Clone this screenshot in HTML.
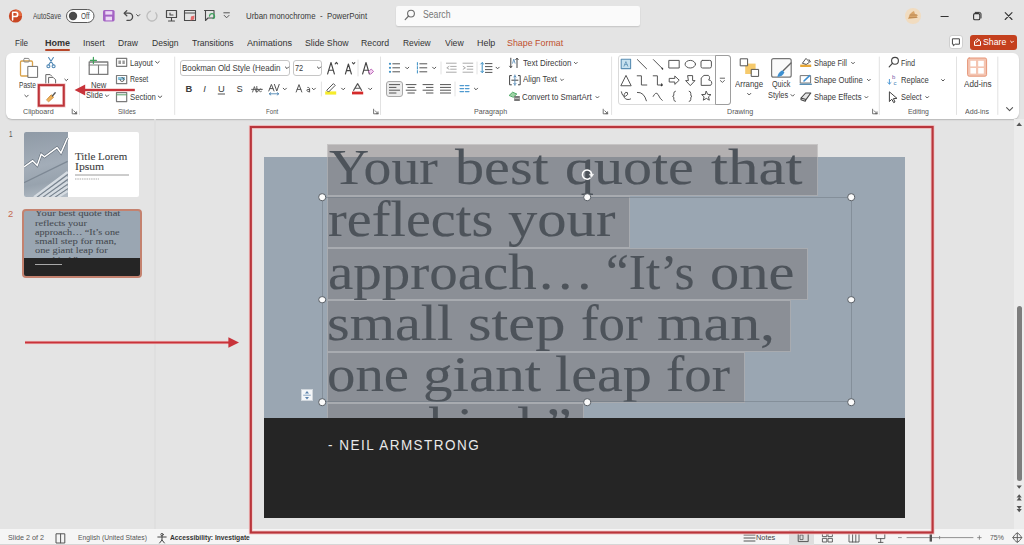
<!DOCTYPE html>
<html><head><meta charset="utf-8">
<style>
*{margin:0;padding:0;box-sizing:border-box}
html,body{width:1024px;height:545px;overflow:hidden;background:#e4e4e4;font-family:"Liberation Sans",sans-serif;color:#262626}
.a{position:absolute;white-space:nowrap}
.tx{position:absolute;white-space:pre;transform-origin:0 0}
#ribbon{position:absolute;left:6px;top:52.5px;width:1013px;height:66px;background:#fff;border-radius:6px;box-shadow:0 1px 1.5px rgba(0,0,0,.2)}
.hb{position:absolute;background:rgba(123,116,118,.47);box-shadow:inset 0 0 0 1px rgba(255,255,255,.25)}
.ql{position:absolute;left:329px;font-family:"Liberation Serif",serif;font-size:50px;line-height:52px;color:#4d535a;-webkit-text-stroke:0.35px #4d535a;white-space:nowrap;transform-origin:0 0}
.hd{position:absolute;width:7.6px;height:7.6px;border-radius:50%;background:#fbfbfb;border:1.3px solid #575d64;transform:translate(-50%,-50%)}
.tl{position:absolute;left:35.4px;font-family:"Liberation Serif",serif;font-size:8.6px;line-height:9px;color:#464b51;-webkit-text-stroke:0.06px #464b51;white-space:nowrap;transform-origin:0 0}
svg{position:absolute;left:0;top:0;overflow:visible}
</style></head><body>

<!-- search box -->
<div class="a" style="left:396px;top:6px;width:244px;height:20px;background:#fafafa;border-radius:2px;box-shadow:0 1px 1.5px rgba(0,0,0,.14)"></div>
<!-- comment + share -->
<div class="a" style="left:948.8px;top:34.5px;width:14.5px;height:14.5px;background:#fff;border:1px solid #cfcfcf;border-radius:3px"></div>
<div class="a" style="left:969.5px;top:34.5px;width:47.8px;height:15px;background:#c4401e;border-radius:3px"></div>
<!-- home underline -->
<div class="a" style="left:45px;top:49px;width:25px;height:2px;background:#b7472a;border-radius:1px"></div>

<div id="ribbon"></div>
<!-- ribbon boxes -->
<div class="a" style="left:180.3px;top:60px;width:110px;height:16px;border:1px solid #c6c6c6;border-radius:3px;background:#fff"></div>
<div class="a" style="left:293.1px;top:60px;width:29px;height:16px;border:1px solid #c6c6c6;border-radius:3px;background:#fff"></div>
<div class="a" style="left:386.4px;top:81px;width:16.5px;height:16px;border:1px solid #a8a8a8;border-radius:3px;background:#ececec"></div>
<div class="a" style="left:617.7px;top:55.2px;width:113px;height:49.5px;border:1px solid #dadada;border-radius:3px;background:#fff"></div>
<div class="a" style="left:715.3px;top:55.2px;width:15.4px;height:49.5px;border:1px solid #9e9e9e;border-radius:0 3px 3px 0"></div>

<!-- thumbnails pane -->
<div class="a" style="left:154px;top:119px;width:2px;height:410px;background:#dfdfdf"></div>
<div class="a" style="left:24px;top:131.6px;width:114.7px;height:65.2px;background:#fff;border-radius:2px;overflow:hidden">
  <div class="a" style="left:0;top:0;width:43.7px;height:65.2px;background:linear-gradient(170deg,#8f9aa6 0%,#a3adb8 50%,#98a3ae 75%,#b5bec7 100%)"></div>
  <svg width="115" height="66" viewBox="0 0 115 66">
    <path d="M0 50.6 L43.6 29.4" stroke="#7d8894" stroke-width="1.2"/>
    <path d="M10 65.2 L43.7 40 M16 65.2 L43.7 45 M22 65.2 L43.7 50 M28 65.2 L43.7 54.5 M34 65.2 L43.7 59" stroke="#d6dce2" stroke-width="2.2"/>
    <path d="M13 65.2 L43.7 42.5 M19 65.2 L43.7 47.5 M25 65.2 L43.7 52.2 M31 65.2 L43.7 56.8" stroke="#6f7a86" stroke-width=".9"/>
    <path d="M0 34.8 L8.6 28.8 L13.2 33.4 L17.2 22.2 L20.5 24.8 L33 15.6 L37 20.9 L43.6 5.7" fill="none" stroke="#5d6874" stroke-width="2.6"/>
    <path d="M0 34.8 L8.6 28.8 L13.2 33.4 L17.2 22.2 L20.5 24.8 L33 15.6 L37 20.9 L43.6 5.7" fill="none" stroke="#fff" stroke-width="1.5"/>
    <path d="M51 43 H105" stroke="#9a9a9a" stroke-width="1"/>
    <path d="M51 47 H75" stroke="#aaa" stroke-width="1.2" stroke-dasharray="1.5 .8"/>
  </svg>
</div>
<div class="a" style="left:22px;top:209.1px;width:119.8px;height:68.9px;border:2.5px solid #c4826f;border-radius:4px;background:#9aa6b2;overflow:hidden">
  <div class="a" style="left:0;top:47px;width:120px;height:20px;background:#252525;border-radius:0 0 2px 2px"></div>
  <div class="a" style="left:11px;top:53px;width:27px;height:1.4px;background:#a8a8a8"></div>
</div>
<div class="a" style="left:24px;top:211px;width:115.5px;height:47px;overflow:hidden">
  <div class="tl" style="left:11.4px;top:-2px;transform:scaleX(1.235)">Your best quote that</div>
  <div class="tl" style="left:11.4px;top:7.5px;transform:scaleX(1.2)">reflects your</div>
  <div class="tl" style="left:11.4px;top:16.5px;transform:scaleX(1.18)">approach… “It’s one</div>
  <div class="tl" style="left:11.4px;top:26px;transform:scaleX(1.235)">small step for man,</div>
  <div class="tl" style="left:11.4px;top:35px;transform:scaleX(1.205)">one giant leap for</div>
  <div class="tl" style="left:11.4px;top:44.5px;transform:scaleX(1.19)">mankind.”</div>
</div>

<!-- slide -->
<div class="a" style="left:264px;top:157px;width:641px;height:360.5px;background:#9aa6b2"></div>
<div class="hb" style="left:327px;top:144px;width:491px;height:52px"></div>
<div class="hb" style="left:327px;top:196px;width:303px;height:52px"></div>
<div class="hb" style="left:327px;top:248px;width:481px;height:52px"></div>
<div class="hb" style="left:327px;top:300px;width:464px;height:52px"></div>
<div class="hb" style="left:327px;top:352px;width:418px;height:51px"></div>
<div class="hb" style="left:327px;top:403px;width:257px;height:20px"></div>
<div class="tx" style="left:328.90px;top:142.12px;font-size:50px;line-height:50px;color:#4d535a;font-weight:normal;font-family:&quot;Liberation Serif&quot;;transform:scaleX(1.1121);-webkit-text-stroke:0.12px #4d535a;">Your</div>
<div class="tx" style="left:454.60px;top:142.12px;font-size:50px;line-height:50px;color:#4d535a;font-weight:normal;font-family:&quot;Liberation Serif&quot;;transform:scaleX(1.1643);-webkit-text-stroke:0.12px #4d535a;">best</div>
<div class="tx" style="left:564.74px;top:142.12px;font-size:50px;line-height:50px;color:#4d535a;font-weight:normal;font-family:&quot;Liberation Serif&quot;;transform:scaleX(1.1599);-webkit-text-stroke:0.12px #4d535a;">quote</div>
<div class="tx" style="left:711.30px;top:142.12px;font-size:50px;line-height:50px;color:#4d535a;font-weight:normal;font-family:&quot;Liberation Serif&quot;;transform:scaleX(1.2200);-webkit-text-stroke:0.12px #4d535a;">that</div>
<div class="tx" style="left:327.63px;top:193.62px;font-size:50px;line-height:50px;color:#4d535a;font-weight:normal;font-family:&quot;Liberation Serif&quot;;transform:scaleX(1.1233);-webkit-text-stroke:0.12px #4d535a;">reflects</div>
<div class="tx" style="left:507.50px;top:193.62px;font-size:50px;line-height:50px;color:#4d535a;font-weight:normal;font-family:&quot;Liberation Serif&quot;;transform:scaleX(1.1717);-webkit-text-stroke:0.12px #4d535a;">your</div>
<div class="tx" style="left:327.66px;top:246.62px;font-size:50px;line-height:50px;color:#4d535a;font-weight:normal;font-family:&quot;Liberation Serif&quot;;transform:scaleX(1.1398);-webkit-text-stroke:0.12px #4d535a;">approach…</div>
<div class="tx" style="left:606.34px;top:246.62px;font-size:50px;line-height:50px;color:#4d535a;font-weight:normal;font-family:&quot;Liberation Serif&quot;;transform:scaleX(1.0275);-webkit-text-stroke:0.12px #4d535a;">“It’s</div>
<div class="tx" style="left:709.63px;top:246.62px;font-size:50px;line-height:50px;color:#4d535a;font-weight:normal;font-family:&quot;Liberation Serif&quot;;transform:scaleX(1.1700);-webkit-text-stroke:0.12px #4d535a;">one</div>
<div class="tx" style="left:327.07px;top:297.93px;font-size:50px;line-height:50px;color:#4d535a;font-weight:normal;font-family:&quot;Liberation Serif&quot;;transform:scaleX(1.1647);-webkit-text-stroke:0.12px #4d535a;">small</div>
<div class="tx" style="left:467.58px;top:297.93px;font-size:50px;line-height:50px;color:#4d535a;font-weight:normal;font-family:&quot;Liberation Serif&quot;;transform:scaleX(1.2097);-webkit-text-stroke:0.12px #4d535a;">step</div>
<div class="tx" style="left:581.44px;top:297.93px;font-size:50px;line-height:50px;color:#4d535a;font-weight:normal;font-family:&quot;Liberation Serif&quot;;transform:scaleX(1.0581);-webkit-text-stroke:0.12px #4d535a;">for</div>
<div class="tx" style="left:657.30px;top:297.93px;font-size:50px;line-height:50px;color:#4d535a;font-weight:normal;font-family:&quot;Liberation Serif&quot;;transform:scaleX(1.1979);-webkit-text-stroke:0.12px #4d535a;">man,</div>
<div class="tx" style="left:327.46px;top:348.73px;font-size:50px;line-height:50px;color:#4d535a;font-weight:normal;font-family:&quot;Liberation Serif&quot;;transform:scaleX(1.1357);-webkit-text-stroke:0.12px #4d535a;">one</div>
<div class="tx" style="left:422.93px;top:348.73px;font-size:50px;line-height:50px;color:#4d535a;font-weight:normal;font-family:&quot;Liberation Serif&quot;;transform:scaleX(1.1827);-webkit-text-stroke:0.12px #4d535a;">giant</div>
<div class="tx" style="left:555.24px;top:348.73px;font-size:50px;line-height:50px;color:#4d535a;font-weight:normal;font-family:&quot;Liberation Serif&quot;;transform:scaleX(1.1627);-webkit-text-stroke:0.12px #4d535a;">leap</div>
<div class="tx" style="left:666.10px;top:348.73px;font-size:50px;line-height:50px;color:#4d535a;font-weight:normal;font-family:&quot;Liberation Serif&quot;;transform:scaleX(1.0963);-webkit-text-stroke:0.12px #4d535a;">for</div>
<div class="tx" style="left:327.84px;top:400.12px;font-size:50px;line-height:50px;color:#4d535a;font-weight:normal;font-family:&quot;Liberation Serif&quot;;transform:scaleX(1.1624);-webkit-text-stroke:0.12px #4d535a;">mankind.”</div>
<div class="a" style="left:264px;top:418px;width:641px;height:99.5px;background:#252525"></div>
<div class="a" style="left:327.5px;top:437.4px;font-size:15px;line-height:15px;letter-spacing:1.65px;color:#e9e9e9;transform:scaleX(0.9);transform-origin:0 0">- NEIL ARMSTRONG</div>
<!-- selection frame -->
<div class="a" style="left:322px;top:196.7px;width:530px;height:205.8px;border:1px solid rgba(110,120,130,.5)"></div>
<div class="hd" style="left:322.4px;top:197.2px"></div>
<div class="hd" style="left:587px;top:197.2px"></div>
<div class="hd" style="left:851.4px;top:197.2px"></div>
<div class="hd" style="left:322.4px;top:299.6px"></div>
<div class="hd" style="left:851.4px;top:299.6px"></div>
<div class="hd" style="left:322.4px;top:402px"></div>
<div class="hd" style="left:587px;top:402px"></div>
<div class="hd" style="left:851.4px;top:402px"></div>
<div class="a" style="left:301px;top:389px;width:12px;height:12px;background:#f4f6f8;border:1px solid #d0d6dc"></div>

<!-- status bar -->
<div class="a" style="left:0;top:529px;width:1024px;height:16px;background:#f5f5f5;border-bottom:1px solid #d6d6d6"></div>
<div class="a" style="left:789px;top:530px;width:25.4px;height:15px;background:#dedede"></div>
<!-- scrollbar -->
<div class="a" style="left:1014px;top:119px;width:10px;height:410px;background:#ececec"></div>
<div class="a" style="left:1017px;top:306px;width:4.6px;height:175px;background:#7d7d7d;border-radius:3px"></div>

<svg width="1024" height="545" viewBox="0 0 1024 545" fill="none" stroke-linecap="round" stroke-linejoin="round">
<!-- ===== title bar ===== -->
<circle cx="15.5" cy="16" r="6.6" fill="#c94724"/>
<path d="M15.5 9.4 A6.6 6.6 0 0 1 22.1 16 L15.5 16Z" fill="#e36a3f"/>
<path d="M12.6 20 V12.3 H15.6 A2.1 2.1 0 0 1 15.6 16.5 H12.6" stroke="#fff" stroke-width="1.5"/>
<rect x="66.5" y="9.5" width="27.5" height="13" rx="6.5" stroke="#595959" stroke-width="1" fill="#fdfdfd"/>
<circle cx="73" cy="16" r="4.2" fill="#4a4a4a"/>
<rect x="103" y="10" width="11.6" height="11.4" rx="1.6" fill="#a463c4"/>
<rect x="105.3" y="11.2" width="7" height="3.4" fill="#ecd9f5"/>
<rect x="105.6" y="16.6" width="6.4" height="3.8" fill="#ecd9f5"/>
<path d="M124.5 13.2 H129 A3.6 3.6 0 0 1 129 20.4 H127" stroke="#4a4a4a" stroke-width="1.3"/>
<path d="M126.8 10.6 L124.2 13.2 L126.8 15.8" stroke="#4a4a4a" stroke-width="1.3"/>
<path d="M136.6 14.6 L138.2 16.2 L139.8 14.6" stroke="#555" stroke-width="1"/>
<path d="M150.5 11.2 A5 5 0 1 0 155.8 12.8" stroke="#bdbdbd" stroke-width="1.3"/>
<rect x="166.5" y="10.5" width="10" height="7" stroke="#4a4a4a" stroke-width="1.2"/>
<path d="M171.5 17.5 V21 M168.5 21 H174.5 M170 13 V15 H173" stroke="#4a4a4a" stroke-width="1.1"/>
<rect x="184.5" y="10.5" width="11" height="10" stroke="#4a4a4a" stroke-width="1.1"/>
<path d="M184.5 13 H195.5" stroke="#4a4a4a" stroke-width="1.1"/>
<path d="M190.5 20.5 L191 16.5 L194.5 15.5 L194 19.5 Z" fill="#e46a6a"/>
<path d="M204.5 10.5 H214 V18 H208 L205.5 20.5 V10.5Z" stroke="#4a4a4a" stroke-width="1.1"/>
<path d="M209.5 16 A2.5 2.5 0 1 1 213 18.5" stroke="#3aa05a" stroke-width="1.3"/>
<path d="M223.8 12.8 H229.4 M224.2 15.4 L226.6 17.8 L229 15.4" stroke="#555" stroke-width="1"/>
<!-- search magnifier -->
<circle cx="411" cy="13.6" r="3.4" stroke="#6a6a6a" stroke-width="1.1"/>
<path d="M408.6 16 L405.2 19.6" stroke="#6a6a6a" stroke-width="1.2"/>
<!-- avatar -->
<circle cx="913" cy="16" r="8" fill="#f1dcc0"/>
<path d="M908 19 Q910 12 914 11 L915 14 L918 15 L916 18 Z" fill="#d8a56a"/>
<path d="M909.5 17.5 H917 M910 15 H916.5" stroke="#b98550" stroke-width=".8"/>
<!-- window controls -->
<path d="M941 16.5 H948.2" stroke="#333" stroke-width="1.1"/>
<rect x="973.6" y="13.6" width="6.2" height="6.2" rx="1.3" stroke="#333" stroke-width="1.1"/>
<path d="M975.2 12.4 H979.4 A1.6 1.6 0 0 1 981 14 V18" stroke="#333" stroke-width="1"/>
<path d="M1005.2 12.7 L1012 19.5 M1012 12.7 L1005.2 19.5" stroke="#333" stroke-width="1.1"/>
<!-- comment icon -->
<path d="M952.8 38.8 H959.4 V44.2 H955.2 L953.4 45.8 V44.2 H952.8Z" stroke="#444" stroke-width="1"/>
<!-- share icon + chevron -->
<path d="M974.5 45 V41.5 L977.5 39 L980.5 41.5 V45 Z M976 42.5 L979.5 40" stroke="#fff" stroke-width="1"/>
<path d="M1010.6 41.2 L1012 42.6 L1013.4 41.2" stroke="#fff" stroke-width="1"/>

<!-- ===== ribbon separators ===== -->
<g stroke="#e2e2e2" stroke-width="1">
<path d="M79.5 57 V114.5 M174.7 57 V114.5 M380.5 57 V114.5 M611.6 57 V114.5 M879.3 57 V114.5 M956.5 57 V114.5 M997.8 57 V114.5"/>
<path d="M358 60 V76 M321.4 82 V96 M441 62 V74 M477 62 V74 M455 82 V96"/>
</g>
<!-- dialog launchers -->
<g stroke="#666" stroke-width=".9">
<path d="M72.2 109.2 V113.8 H76.8 M73.8 110.8 L76.6 113.6 M76.6 111.8 V113.6 H74.8"/>
<path d="M373.6 109.2 V113.8 H378.2 M375.2 110.8 L378 113.6 M378 111.8 V113.6 H376.2"/>
<path d="M603.2 109.2 V113.8 H607.8 M604.8 110.8 L607.6 113.6 M607.6 111.8 V113.6 H605.8"/>
<path d="M872.6 109.2 V113.8 H877.2 M874.2 110.8 L877 113.6 M877 111.8 V113.6 H875.2"/>
</g>

<!-- ===== clipboard ===== -->
<rect x="20.5" y="61" width="12" height="15" rx="1.2" stroke="#d9a24b" stroke-width="1.3" fill="#fff"/>
<rect x="23.8" y="58.4" width="5.4" height="3.6" rx="1" stroke="#8a8a8a" stroke-width="1"/>
<rect x="28.2" y="66.4" width="9.4" height="11" fill="#fff" stroke="#6e6e6e" stroke-width="1"/>
<path d="M24.8 95.2 L26.5 96.9 L28.2 95.2" stroke="#555" stroke-width="1"/>
<g stroke="#4f87b4" stroke-width="1.1">
<path d="M48.6 57.5 L53.4 65 M53.4 57.5 L48.6 65"/>
<circle cx="48.4" cy="66.2" r="1.5"/><circle cx="53.6" cy="66.2" r="1.5"/>
</g>
<path d="M45.8 83.8 V74.6 H50.2 L51.8 76.2 M48.6 83.8 V77.4 H53.2 L55.6 79.8 V83.8" stroke="#666" stroke-width="1"/>
<path d="M64.8 79.2 L66.3 80.7 L67.8 79.2" stroke="#555" stroke-width="1"/>
<path d="M46.8 99.6 L51.2 94.8 L53.6 97.2 L48.8 101.6 Z" fill="#f0b25a" stroke="#c98a34" stroke-width=".9"/>
<path d="M52.4 96 L55.2 92.8" stroke="#555" stroke-width="1.3"/>

<!-- ===== slides ===== -->
<rect x="89.2" y="62" width="18.6" height="12.4" stroke="#7b7b7b" stroke-width="1.3"/>
<path d="M89.2 65 H107.8 M98.5 65 V74.4" stroke="#7b7b7b" stroke-width="1.1"/>
<path d="M93.4 57.4 V63.4 M90.4 60.4 H96.4" stroke="#3fa35a" stroke-width="1.2"/>
<path d="M105.4 95 L107 96.6 L108.6 95" stroke="#555" stroke-width="1"/>
<rect x="116.5" y="58.3" width="10.2" height="8" stroke="#7b7b7b" stroke-width="1.2"/>
<path d="M118.4 60.6 H121 V64 H118.4Z M122.4 60.6 H124.8 V64 H122.4Z" fill="#9a9a9a"/>
<path d="M155.6 61.6 L157.4 63.2 L159.2 61.6" stroke="#555" stroke-width="1"/>
<rect x="116.5" y="75.5" width="10.2" height="8.2" stroke="#7b7b7b" stroke-width="1.2"/>
<path d="M118 77 H125 V80 H118Z" fill="#8cc6e0"/>
<path d="M120 79.5 A2 2 0 1 0 122 77.5" stroke="#444" stroke-width=".8"/>
<rect x="116.5" y="92.6" width="10.2" height="9" stroke="#7b7b7b" stroke-width="1.2"/>
<path d="M116.5 94.8 H126.7" stroke="#5aa06a" stroke-width="1"/>
<path d="M158.2 96 L160 97.6 L161.8 96" stroke="#555" stroke-width="1"/>

<!-- ===== font ===== -->
<path d="M285.4 67 L287 68.6 L288.6 67 M317.4 67 L319 68.6 L320.6 67" stroke="#444" stroke-width="1"/>
<g stroke="#444" stroke-width="1.1">
<path d="M327.6 74 L331 62.5 L334.4 74 M328.8 70.2 H333.2 M335.2 63.8 L336.4 62.4 L337.6 63.8"/>
<path d="M345.4 74 L348.4 64 L351.4 74 M346.4 70.6 H350.4 M352.4 62.6 L353.6 64 L354.8 62.6"/>
<path d="M362.6 74 L366 62.5 L369.4 74 M363.8 70.2 H368.2"/>
</g>
<path d="M368.6 71.6 L371.2 69 L373.6 71.4 L371 74 Z" fill="#f4d2f2" stroke="#b45bb0" stroke-width=".9"/>
<g fill="#3c3c3c" font-family="Liberation Sans" font-size="9.4">
<text x="185.6" y="92.2" font-weight="bold">B</text>
<text x="203.2" y="92.2" font-style="italic">I</text>
<text x="218" y="92.2">U</text>
<text x="236.6" y="92.2">S</text>
</g>
<path d="M218.2 94 H224.6" stroke="#3c3c3c" stroke-width=".9"/>
<g stroke="#555" stroke-width=".9">
<path d="M252.6 92 L254.4 86.6 L256.2 92 M256.8 92 V86.4 M256.8 89 A1.4 1.4 0 1 1 256.8 91.6 M261.4 89.2 A1.4 1.4 0 1 0 261.4 91.4 M251.6 89.4 H262.4"/>
</g>
<g stroke="#555" stroke-width="1">
<path d="M268.8 91 L271.4 84.4 L274 91 M269.8 88.6 H273 M274.4 84.4 L276.8 91 L279.2 84.4"/>
</g>
<path d="M269.4 93.8 H278.6 M269.4 93.8 L270.8 92.6 M269.4 93.8 L270.8 95 M278.6 93.8 L277.2 92.6 M278.6 93.8 L277.2 95" stroke="#4f87b4" stroke-width=".9"/>
<path d="M283.2 88.2 L284.8 89.8 L286.4 88.2" stroke="#555" stroke-width="1"/>
<g stroke="#555" stroke-width="1">
<path d="M296.2 92 L299 84.6 L301.8 92 M297.2 89.4 H300.8"/>
<path d="M307.8 87.4 A2 2 0 0 1 309.6 88.4 V92 M309.6 89.6 H307.2 A1.3 1.3 0 1 0 309.6 91"/>
<path d="M312.2 88.2 L313.8 89.8 L315.4 88.2"/>
</g>
<rect x="325.2" y="91.4" width="11" height="3.2" fill="#f6ec2a"/>
<path d="M327 90 L333.4 83.6 L335.2 85.4 L328.8 91.8 Z" stroke="#555" stroke-width="1"/>
<path d="M341.6 88.2 L343.2 89.8 L344.8 88.2" stroke="#555" stroke-width="1"/>
<path d="M353.6 90.4 L357.6 83.6 L361.6 90.4 M354.8 88.2 H360.4" stroke="#555" stroke-width="1.1"/>
<rect x="352" y="91.6" width="11.2" height="2.8" fill="#d42a2a"/>
<path d="M368.6 88.2 L370.2 89.8 L371.8 88.2" stroke="#555" stroke-width="1"/>

<!-- ===== paragraph ===== -->
<g fill="#3a8fc4">
<circle cx="390" cy="63.8" r="1.1"/><circle cx="390" cy="67.8" r="1.1"/><circle cx="390" cy="71.8" r="1.1"/>
</g>
<path d="M392.8 63.8 H399.6 M392.8 67.8 H399.6 M392.8 71.8 H399.6" stroke="#555" stroke-width="1"/>
<path d="M405.6 67.2 L407.2 68.8 L408.8 67.2" stroke="#555" stroke-width="1"/>
<path d="M417.4 62.6 V65.2 M417.4 66.6 V69 M417.4 70.6 V73" stroke="#3a8fc4" stroke-width="1"/>
<path d="M419.8 63.8 H426.8 M419.8 67.8 H426.8 M419.8 71.8 H426.8" stroke="#555" stroke-width="1"/>
<path d="M432.6 67.2 L434.2 68.8 L435.8 67.2" stroke="#555" stroke-width="1"/>
<path d="M446.4 63.2 H456.2 M450.6 66.4 H456.2 M450.6 69.2 H456.2 M446.4 72.2 H456.2 M449 66.4 L446.8 67.8 L449 69.2" stroke="#aaa" stroke-width="1"/>
<path d="M463 63.2 H472.8 M467.2 66.4 H472.8 M467.2 69.2 H472.8 M463 72.2 H472.8 M463.2 66.4 L465.4 67.8 L463.2 69.2" stroke="#aaa" stroke-width="1"/>
<path d="M482.2 62.8 V72.4 M480.8 64 L482.2 62.6 L483.6 64 M480.8 71.2 L482.2 72.6 L483.6 71.2" stroke="#3a8fc4" stroke-width="1"/>
<path d="M485.4 63.6 H492 M485.4 66.6 H492 M485.4 69.6 H492 M485.4 72.4 H492" stroke="#555" stroke-width="1"/>
<path d="M496 67.2 L497.6 68.8 L499.2 67.2" stroke="#555" stroke-width="1"/>
<path d="M389.4 84.6 H399.6 M389.4 87.4 H396 M389.4 90.2 H399.6 M389.4 93 H396" stroke="#555" stroke-width="1"/>
<path d="M406.2 84.6 H416 M407.8 87.4 H414.4 M406.2 90.2 H416 M407.8 93 H414.4" stroke="#555" stroke-width="1"/>
<path d="M423 84.6 H433 M426.4 87.4 H433 M423 90.2 H433 M426.4 93 H433" stroke="#555" stroke-width="1"/>
<path d="M440.4 84.6 H450.6 M440.4 87.4 H450.6 M440.4 90.2 H450.6 M440.4 93 H450.6" stroke="#555" stroke-width="1"/>
<path d="M460 85.6 H463.6 M465.4 85.6 H469 M460 88.6 H463.6 M465.4 88.6 H469 M460 91.6 H463.6 M465.4 91.6 H469" stroke="#4f9ad0" stroke-width="1.2"/>
<path d="M474.4 88.2 L476 89.8 L477.6 88.2" stroke="#555" stroke-width="1"/>
<path d="M510.8 58.2 V67.4 M509.6 66.2 L510.8 67.6 L512 66.2 M517 67.6 V58.4 M515.8 59.6 L517 58.2 L518.2 59.6" stroke="#444" stroke-width="1"/>
<path d="M512.6 63.2 L513.8 59.2 L515 63.2" stroke="#4f87b4" stroke-width=".8"/>
<path d="M574.4 62.4 L575.8 63.8 L577.2 62.4" stroke="#555" stroke-width="1"/>
<path d="M511.4 75.6 H509.6 V84.8 H511.4 M518.4 75.6 H520.2 V84.8 H518.4 M511.8 80.2 H518" stroke="#444" stroke-width="1"/>
<path d="M514.9 75 V85.4 M513.8 77 L514.9 75.8 L516 77 M513.8 83.4 L514.9 84.6 L516 83.4" stroke="#4f87b4" stroke-width=".9"/>
<path d="M560.6 79.2 L562 80.6 L563.4 79.2" stroke="#555" stroke-width="1"/>
<path d="M509.4 95.2 L512.6 92.2 L516.8 94 L513.6 97 Z" fill="#9fd3a6" stroke="#3fa35a" stroke-width=".9"/>
<rect x="514.2" y="96" width="5.6" height="5" fill="#777"/>
<path d="M515 98.4 H519" stroke="#ddd" stroke-width=".7"/>
<path d="M596 96.6 L597.4 98 L598.8 96.6" stroke="#555" stroke-width="1"/>

<!-- ===== drawing gallery ===== -->
<rect x="621.2" y="59.2" width="9.4" height="9.4" fill="#c6e1ef" stroke="#5a8fb4" stroke-width="1.1"/>
<path d="M624 66.2 L625.9 61.6 L627.8 66.2 M624.8 64.6 H627" stroke="#5a8fb4" stroke-width=".8"/>
<g stroke="#555" stroke-width="1">
<path d="M637.4 59.6 L646.6 68.8"/>
<path d="M653.4 59.6 L662 68.2"/>
<rect x="669.2" y="60.4" width="10" height="7.6"/>
<ellipse cx="690.3" cy="64.2" rx="5.2" ry="3.8"/>
<rect x="701" y="60.4" width="10.4" height="7.6" rx="1.6"/>
<path d="M621 85.4 L626 75.4 L631 85.4 Z"/>
<path d="M637.2 75.8 H641.4 V85 H646.8"/>
<path d="M653.2 75.8 H657.4 V85 H661.6"/>
<path d="M669.6 78.4 H674.8 V76 L679.2 80.2 L674.8 84.4 V82 H669.6 Z"/>
<path d="M688 75.6 H692.6 V80.6 H695 L690.3 85.6 L685.6 80.6 H688 Z"/>
<path d="M701.2 85 V78 L704 75.4 H708.4 A3 3 0 0 1 708.6 80 A3 3 0 0 1 711 85 Z"/>
<path d="M621.4 91.8 Q622.6 97.4 625.6 96.2 Q628.8 94.6 627.4 92.6 Q625.4 91.2 624.2 94.4 Q623.4 98.6 627 99.4 Q629.4 99.8 630.6 99"/>
<path d="M637.4 92.4 Q644 91.8 646.4 100.8"/>
<path d="M653.2 96.4 Q655.8 91.2 658 94.4 Q660 98.8 662.2 100.4"/>
<path d="M675.4 91.2 Q673.8 91.4 673.8 93.4 V95 Q673.8 96.2 672.6 96.4 Q673.8 96.6 673.8 97.8 V99.4 Q673.8 101.2 675.4 101.4"/>
<path d="M689.2 91.2 Q690.8 91.4 690.8 93.4 V95 Q690.8 96.2 692 96.4 Q690.8 96.6 690.8 97.8 V99.4 Q690.8 101.2 689.2 101.4"/>
<path d="M706.3 91.4 L707.7 94.4 L711 94.6 L708.5 96.8 L709.3 100.2 L706.3 98.4 L703.3 100.2 L704.1 96.8 L701.6 94.6 L704.9 94.4 Z"/>
</g>
<path d="M661.6 84 L662.2 85 L661.4 85.6 M662 68.2 L662.6 69" stroke="#333" stroke-width="1.4"/>
<path d="M720.2 78.2 H724.6 M720.4 80.6 L722.4 82.4 L724.4 80.6" stroke="#666" stroke-width="1"/>
<!-- arrange -->
<rect x="745.2" y="63.6" width="10.4" height="10.4" fill="#f6ca6c"/>
<rect x="740.6" y="58.8" width="7" height="7" fill="#fff" stroke="#555" stroke-width="1"/>
<rect x="751.6" y="69.4" width="7" height="7" fill="#fff" stroke="#555" stroke-width="1"/>
<path d="M747.6 93.4 L749.2 95 L750.8 93.4" stroke="#555" stroke-width="1"/>
<!-- quick styles -->
<rect x="771.6" y="58.6" width="19.6" height="18.6" rx="2" stroke="#777" stroke-width="1.2" fill="#fafafa"/>
<path d="M783.4 70.6 L791 63" stroke="#666" stroke-width="1.4"/>
<path d="M777.4 77 Q778 72.2 782.4 70.2 L784.4 72.2 Q782.6 76.6 777.4 77 Z" fill="#3d8fd0"/>
<path d="M791 94.6 L792.6 96.2 L794.2 94.6" stroke="#555" stroke-width="1"/>
<!-- shape fill/outline/effects -->
<rect x="800.2" y="64.6" width="11" height="2.4" fill="#e8a838"/>
<path d="M802.6 63 L806 58.4 L809.6 62.2 L806.6 64.2 Z" stroke="#555" stroke-width="1"/>
<path d="M809 59.6 L810.4 61.8" stroke="#555" stroke-width="1"/>
<path d="M851.6 62.4 L853 63.8 L854.4 62.4" stroke="#555" stroke-width="1"/>
<rect x="800.6" y="75.6" width="10" height="7.4" stroke="#777" stroke-width="1"/>
<path d="M800.2 84.2 H811.2" stroke="#5a8fb4" stroke-width="1.6"/>
<path d="M804 81 L809.6 75.6" stroke="#3d8fd0" stroke-width="1.6"/>
<path d="M867.4 79.4 L868.8 80.8 L870.2 79.4" stroke="#555" stroke-width="1"/>
<path d="M801 98 L805.6 93 H810.8 L806 99.6 Z M801 98 V99.8 L805.2 101.2 L806 99.6" stroke="#444" stroke-width="1.1" fill="#e4e4e4"/>
<path d="M865 96.6 L866.4 98 L867.8 96.6" stroke="#555" stroke-width="1"/>
<!-- editing -->
<circle cx="895" cy="60.8" r="3.4" stroke="#444" stroke-width="1.1"/>
<path d="M892.6 63.2 L889.2 66.8" stroke="#444" stroke-width="1.2"/>
<text x="892" y="79.2" font-family="Liberation Sans" font-size="6" fill="#7a5aa8">b</text>
<text x="893.4" y="85.4" font-family="Liberation Sans" font-size="6" fill="#3d7fb8">c</text>
<path d="M889.4 79.4 V84 L891 82.6 M889.4 84 L887.8 82.6" stroke="#3d8fd0" stroke-width=".9"/>
<path d="M941.6 79.6 L943 81 L944.4 79.6" stroke="#555" stroke-width="1"/>
<path d="M889.4 92.2 V101.6 L891.8 99.2 L893.6 102.6 L895 102 L893.4 98.6 L896.6 98.4 Z" stroke="#444" stroke-width="1"/>
<path d="M925.8 96.6 L927.2 98 L928.6 96.6" stroke="#555" stroke-width="1"/>
<!-- add-ins -->
<rect x="967.6" y="58" width="19" height="18.2" rx="1.6" fill="#f4c5b2" stroke="#e59678" stroke-width="1"/>
<g fill="#fff"><rect x="970.4" y="60.8" width="5.6" height="5.6"/><rect x="978.2" y="60.8" width="5.6" height="5.6"/><rect x="970.4" y="68" width="5.6" height="5.6"/><rect x="978.2" y="68" width="5.6" height="5.6"/></g>
<path d="M1006.6 107.6 L1009.6 110.6 L1012.6 107.6" stroke="#555" stroke-width="1.1"/>

<!-- ===== slide: rotation handle + autofit icon ===== -->
<path d="M591.6 173.8 A4.6 4.6 0 1 0 589.96 178.1" stroke="#fff" stroke-width="1.5"/>
<path d="M589.6 174.2 H593.6 L591.6 177.2 Z" fill="#fff" stroke="#fff" stroke-width=".5"/>
<path d="M307 391 L309 393.4 H305 Z M307 399.4 L309 397 H305 Z" fill="#5a82ac"/>
<path d="M303.6 395.2 H310.4" stroke="#5a82ac" stroke-width=".7"/>

<!-- ===== scrollbar arrows ===== -->
<path d="M1016.4 126 L1019.2 122.6 L1022 126 Z" fill="#555"/>
<path d="M1016.6 485.6 L1019.2 488.8 L1021.8 485.6 Z" fill="#555"/>
<path d="M1016.6 497.4 L1019.2 494.2 L1021.8 497.4 Z M1016.6 500.4 L1019.2 497.2 L1021.8 500.4 Z" fill="#555"/>
<path d="M1016.6 506 L1019.2 509.2 L1021.8 506 Z M1016.6 509 L1019.2 512.2 L1021.8 509 Z" fill="#555"/>

<!-- ===== status bar icons ===== -->
<path d="M56.4 533.8 H60.6 V543 H56.4 Z M60.6 533.8 H64.8 V543 H60.6" stroke="#555" stroke-width="1"/>
<circle cx="162" cy="534.6" r="1.2" stroke="#444" stroke-width=".9"/>
<path d="M157.8 537 H166.2 M162 536 V540 L159.6 543 M162 540 L164.4 543" stroke="#444" stroke-width="1"/>
<path d="M744 535 H755 M744 538 H755 M744 541 H755" stroke="#555" stroke-width="1"/>
<rect x="798.6" y="533" width="9.6" height="8.6" stroke="#555" stroke-width="1"/>
<path d="M800.4 535 H803 V539.6 H800.4 Z" stroke="#555" stroke-width=".8"/>
<rect x="822.8" y="533" width="4" height="3.6" stroke="#555" stroke-width=".9"/>
<rect x="828.4" y="533" width="4" height="3.6" stroke="#555" stroke-width=".9"/>
<rect x="822.8" y="538.4" width="4" height="3.6" stroke="#555" stroke-width=".9"/>
<rect x="828.4" y="538.4" width="4" height="3.6" stroke="#555" stroke-width=".9"/>
<path d="M849.4 533.4 H859 V542 H849.4 Z M852.6 533.4 V542 M855.8 533.4 V542" stroke="#555" stroke-width=".9"/>
<path d="M876.6 533.4 H884.8 V538.6 H876.6 Z M880.7 538.6 V542.4 M878.4 542.4 H883" stroke="#555" stroke-width=".9"/>
<path d="M898.4 537.6 H901.4 M907 537.6 H973 M977.6 537.6 H981.2 M979.4 535.8 V539.4 M939.6 536.4 V538.8" stroke="#777" stroke-width=".8"/>
<rect x="929.6" y="533.6" width="2.4" height="8" fill="#555"/>
<path d="M1013 537.6 H1021.6 M1017.3 533.2 V542 M1015 534.6 L1017.3 532.8 L1019.6 534.6 M1015 540.6 L1017.3 542.4 L1019.6 540.6 M1014.4 535.4 L1012.8 537.6 L1014.4 539.8 M1020.2 535.4 L1021.8 537.6 L1020.2 539.8" stroke="#555" stroke-width=".9"/>
</svg>


<div class="tx" style="left:33.00px;top:11.68px;font-size:9px;line-height:9px;color:#3c3c3c;font-weight:normal;font-family:&quot;Liberation Sans&quot;;transform:scaleX(0.7175);">AutoSave</div>
<div class="tx" style="left:81.00px;top:12.00px;font-size:8.5px;line-height:8.5px;color:#444;font-weight:normal;font-family:&quot;Liberation Sans&quot;;transform:scaleX(0.7614);">Off</div>
<div class="tx" style="left:246.20px;top:11.88px;font-size:9px;line-height:9px;color:#3a3a3a;font-weight:normal;font-family:&quot;Liberation Sans&quot;;transform:scaleX(0.8744);">Urban monochrome  -  PowerPoint</div>
<div class="tx" style="left:423.00px;top:10.34px;font-size:10px;line-height:10px;color:#777;font-weight:normal;font-family:&quot;Liberation Sans&quot;;transform:scaleX(0.8675);">Search</div>
<div class="tx" style="left:14.60px;top:38.81px;font-size:9.2px;line-height:9.2px;color:#333;font-weight:normal;font-family:&quot;Liberation Sans&quot;;transform:scaleX(0.8779);">File</div>
<div class="tx" style="left:45.00px;top:38.81px;font-size:9.2px;line-height:9.2px;color:#333;font-weight:bold;font-family:&quot;Liberation Sans&quot;;transform:scaleX(0.9836);">Home</div>
<div class="tx" style="left:82.60px;top:38.81px;font-size:9.2px;line-height:9.2px;color:#333;font-weight:normal;font-family:&quot;Liberation Sans&quot;;transform:scaleX(0.9434);">Insert</div>
<div class="tx" style="left:117.80px;top:38.81px;font-size:9.2px;line-height:9.2px;color:#333;font-weight:normal;font-family:&quot;Liberation Sans&quot;;transform:scaleX(0.9264);">Draw</div>
<div class="tx" style="left:151.50px;top:38.81px;font-size:9.2px;line-height:9.2px;color:#333;font-weight:normal;font-family:&quot;Liberation Sans&quot;;transform:scaleX(0.9302);">Design</div>
<div class="tx" style="left:192.00px;top:38.81px;font-size:9.2px;line-height:9.2px;color:#333;font-weight:normal;font-family:&quot;Liberation Sans&quot;;transform:scaleX(0.9334);">Transitions</div>
<div class="tx" style="left:247.00px;top:38.81px;font-size:9.2px;line-height:9.2px;color:#333;font-weight:normal;font-family:&quot;Liberation Sans&quot;;transform:scaleX(0.9923);">Animations</div>
<div class="tx" style="left:305.00px;top:38.81px;font-size:9.2px;line-height:9.2px;color:#333;font-weight:normal;font-family:&quot;Liberation Sans&quot;;transform:scaleX(0.9497);">Slide Show</div>
<div class="tx" style="left:361.40px;top:38.81px;font-size:9.2px;line-height:9.2px;color:#333;font-weight:normal;font-family:&quot;Liberation Sans&quot;;transform:scaleX(0.9489);">Record</div>
<div class="tx" style="left:403.30px;top:38.81px;font-size:9.2px;line-height:9.2px;color:#333;font-weight:normal;font-family:&quot;Liberation Sans&quot;;transform:scaleX(0.9184);">Review</div>
<div class="tx" style="left:444.50px;top:38.81px;font-size:9.2px;line-height:9.2px;color:#333;font-weight:normal;font-family:&quot;Liberation Sans&quot;;transform:scaleX(0.9447);">View</div>
<div class="tx" style="left:476.50px;top:38.81px;font-size:9.2px;line-height:9.2px;color:#333;font-weight:normal;font-family:&quot;Liberation Sans&quot;;transform:scaleX(0.9688);">Help</div>
<div class="tx" style="left:507.40px;top:38.81px;font-size:9.2px;line-height:9.2px;color:#c0502e;font-weight:normal;font-family:&quot;Liberation Sans&quot;;transform:scaleX(0.9648);">Shape Format</div>
<div class="tx" style="left:983.00px;top:37.26px;font-size:9.5px;line-height:9.5px;color:#fff;font-weight:normal;font-family:&quot;Liberation Sans&quot;;transform:scaleX(0.9175);">Share</div>
<div class="tx" style="left:18.60px;top:81.56px;font-size:8.2px;line-height:8.2px;color:#3b3b3b;font-weight:normal;font-family:&quot;Liberation Sans&quot;;transform:scaleX(0.8044);">Paste</div>
<div class="tx" style="left:22.70px;top:107.80px;font-size:7.8px;line-height:7.8px;color:#555;font-weight:normal;font-family:&quot;Liberation Sans&quot;;transform:scaleX(0.9172);">Clipboard</div>
<div class="tx" style="left:90.60px;top:80.79px;font-size:8.4px;line-height:8.4px;color:#3b3b3b;font-weight:normal;font-family:&quot;Liberation Sans&quot;;transform:scaleX(0.9206);">New</div>
<div class="tx" style="left:86.20px;top:91.39px;font-size:8.4px;line-height:8.4px;color:#3b3b3b;font-weight:normal;font-family:&quot;Liberation Sans&quot;;transform:scaleX(0.9122);">Slide</div>
<div class="tx" style="left:129.70px;top:58.69px;font-size:8.4px;line-height:8.4px;color:#3b3b3b;font-weight:normal;font-family:&quot;Liberation Sans&quot;;transform:scaleX(0.9063);">Layout</div>
<div class="tx" style="left:129.70px;top:75.39px;font-size:8.4px;line-height:8.4px;color:#3b3b3b;font-weight:normal;font-family:&quot;Liberation Sans&quot;;transform:scaleX(0.8337);">Reset</div>
<div class="tx" style="left:129.70px;top:92.89px;font-size:8.4px;line-height:8.4px;color:#3b3b3b;font-weight:normal;font-family:&quot;Liberation Sans&quot;;transform:scaleX(0.9266);">Section</div>
<div class="tx" style="left:117.50px;top:108.00px;font-size:7.8px;line-height:7.8px;color:#555;font-weight:normal;font-family:&quot;Liberation Sans&quot;;transform:scaleX(0.8389);">Slides</div>
<div class="tx" style="left:181.80px;top:64.29px;font-size:8.4px;line-height:8.4px;color:#3b3b3b;font-weight:normal;font-family:&quot;Liberation Sans&quot;;transform:scaleX(0.9519);">Bookman Old Style (Headin</div>
<div class="tx" style="left:295.00px;top:64.29px;font-size:8.4px;line-height:8.4px;color:#3b3b3b;font-weight:normal;font-family:&quot;Liberation Sans&quot;;transform:scaleX(0.8801);">72</div>
<div class="tx" style="left:265.70px;top:107.90px;font-size:7.8px;line-height:7.8px;color:#555;font-weight:normal;font-family:&quot;Liberation Sans&quot;;transform:scaleX(0.7849);">Font</div>
<div class="tx" style="left:522.50px;top:58.59px;font-size:8.4px;line-height:8.4px;color:#3b3b3b;font-weight:normal;font-family:&quot;Liberation Sans&quot;;transform:scaleX(0.9555);">Text Direction</div>
<div class="tx" style="left:522.50px;top:75.49px;font-size:8.4px;line-height:8.4px;color:#3b3b3b;font-weight:normal;font-family:&quot;Liberation Sans&quot;;transform:scaleX(0.9383);">Align Text</div>
<div class="tx" style="left:522.00px;top:92.69px;font-size:8.4px;line-height:8.4px;color:#3b3b3b;font-weight:normal;font-family:&quot;Liberation Sans&quot;;transform:scaleX(0.9401);">Convert to SmartArt</div>
<div class="tx" style="left:474.00px;top:108.00px;font-size:7.8px;line-height:7.8px;color:#555;font-weight:normal;font-family:&quot;Liberation Sans&quot;;transform:scaleX(0.9120);">Paragraph</div>
<div class="tx" style="left:735.00px;top:80.19px;font-size:8.4px;line-height:8.4px;color:#3b3b3b;font-weight:normal;font-family:&quot;Liberation Sans&quot;;transform:scaleX(0.9424);">Arrange</div>
<div class="tx" style="left:772.00px;top:80.19px;font-size:8.4px;line-height:8.4px;color:#3b3b3b;font-weight:normal;font-family:&quot;Liberation Sans&quot;;transform:scaleX(0.8551);">Quick</div>
<div class="tx" style="left:767.50px;top:91.19px;font-size:8.4px;line-height:8.4px;color:#3b3b3b;font-weight:normal;font-family:&quot;Liberation Sans&quot;;transform:scaleX(0.8842);">Styles</div>
<div class="tx" style="left:814.00px;top:58.69px;font-size:8.4px;line-height:8.4px;color:#3b3b3b;font-weight:normal;font-family:&quot;Liberation Sans&quot;;transform:scaleX(0.8855);">Shape Fill</div>
<div class="tx" style="left:814.00px;top:75.69px;font-size:8.4px;line-height:8.4px;color:#3b3b3b;font-weight:normal;font-family:&quot;Liberation Sans&quot;;transform:scaleX(0.9191);">Shape Outline</div>
<div class="tx" style="left:814.00px;top:92.69px;font-size:8.4px;line-height:8.4px;color:#3b3b3b;font-weight:normal;font-family:&quot;Liberation Sans&quot;;transform:scaleX(0.9131);">Shape Effects</div>
<div class="tx" style="left:727.00px;top:108.00px;font-size:7.8px;line-height:7.8px;color:#555;font-weight:normal;font-family:&quot;Liberation Sans&quot;;transform:scaleX(0.9129);">Drawing</div>
<div class="tx" style="left:901.30px;top:58.69px;font-size:8.4px;line-height:8.4px;color:#3b3b3b;font-weight:normal;font-family:&quot;Liberation Sans&quot;;transform:scaleX(0.8657);">Find</div>
<div class="tx" style="left:901.30px;top:75.69px;font-size:8.4px;line-height:8.4px;color:#3b3b3b;font-weight:normal;font-family:&quot;Liberation Sans&quot;;transform:scaleX(0.9044);">Replace</div>
<div class="tx" style="left:901.30px;top:92.69px;font-size:8.4px;line-height:8.4px;color:#3b3b3b;font-weight:normal;font-family:&quot;Liberation Sans&quot;;transform:scaleX(0.8852);">Select</div>
<div class="tx" style="left:907.70px;top:108.00px;font-size:7.8px;line-height:7.8px;color:#555;font-weight:normal;font-family:&quot;Liberation Sans&quot;;transform:scaleX(0.8765);">Editing</div>
<div class="tx" style="left:963.70px;top:80.39px;font-size:8.4px;line-height:8.4px;color:#3b3b3b;font-weight:normal;font-family:&quot;Liberation Sans&quot;;transform:scaleX(0.9678);">Add-ins</div>
<div class="tx" style="left:964.80px;top:108.20px;font-size:7.8px;line-height:7.8px;color:#555;font-weight:normal;font-family:&quot;Liberation Sans&quot;;transform:scaleX(0.9044);">Add-ins</div>
<div class="tx" style="left:9.00px;top:130.18px;font-size:9px;line-height:9px;color:#555;font-weight:normal;font-family:&quot;Liberation Sans&quot;;transform:scaleX(0.7000);">1</div>
<div class="tx" style="left:8.00px;top:209.98px;font-size:9px;line-height:9px;color:#c46a52;font-weight:normal;font-family:&quot;Liberation Sans&quot;;transform:scaleX(1.0400);">2</div>
<div class="tx" style="left:75.00px;top:151.51px;font-size:10.5px;line-height:10.5px;color:#3f3f3f;font-weight:normal;font-family:&quot;Liberation Serif&quot;;transform:scaleX(1.0420);-webkit-text-stroke:0.1px #3f3f3f;">Title Lorem</div>
<div class="tx" style="left:75.00px;top:162.01px;font-size:10.5px;line-height:10.5px;color:#3f3f3f;font-weight:normal;font-family:&quot;Liberation Serif&quot;;transform:scaleX(1.1118);-webkit-text-stroke:0.1px #3f3f3f;">Ipsum</div>
<div class="tx" style="left:7.60px;top:533.90px;font-size:7.8px;line-height:7.8px;color:#555;font-weight:normal;font-family:&quot;Liberation Sans&quot;;transform:scaleX(0.9205);">Slide 2 of 2</div>
<div class="tx" style="left:77.50px;top:533.90px;font-size:7.8px;line-height:7.8px;color:#555;font-weight:normal;font-family:&quot;Liberation Sans&quot;;transform:scaleX(0.8647);">English (United States)</div>
<div class="tx" style="left:169.60px;top:533.90px;font-size:7.8px;line-height:7.8px;color:#333;font-weight:bold;font-family:&quot;Liberation Sans&quot;;transform:scaleX(0.8569);">Accessibility: Investigate</div>
<div class="tx" style="left:755.60px;top:533.70px;font-size:7.8px;line-height:7.8px;color:#444;font-weight:normal;font-family:&quot;Liberation Sans&quot;;transform:scaleX(0.9478);">Notes</div>
<div class="tx" style="left:989.60px;top:533.70px;font-size:7.8px;line-height:7.8px;color:#555;font-weight:normal;font-family:&quot;Liberation Sans&quot;;transform:scaleX(0.8869);">75%</div>

<svg width="1024" height="545" viewBox="0 0 1024 545" fill="none">
<rect x="250.8" y="127" width="681.8" height="405.5" stroke="#f2c9c9" stroke-width="4"/>
<rect x="250.8" y="127" width="681.8" height="405.5" stroke="#b9353b" stroke-width="2.2"/>
<rect x="38.8" y="85.1" width="25" height="20.6" stroke="#f2c9c9" stroke-width="3.6"/>
<rect x="38.8" y="85.1" width="25" height="20.6" stroke="#bd3439" stroke-width="2"/>
<path d="M84 90 H134.8" stroke="#f2c9c9" stroke-width="3.4"/>
<path d="M84 90 H134.8" stroke="#c8333a" stroke-width="2"/>
<path d="M74.6 90 L85.2 84.6 L85.2 95.4 Z" fill="#c8333a"/>
<path d="M25 342.5 H229" stroke="#f2c9c9" stroke-width="3.4"/>
<path d="M25 342.5 H229" stroke="#c8333a" stroke-width="2"/>
<path d="M239 342.5 L228.4 337.2 L228.4 347.8 Z" fill="#c8333a"/>
</svg>

</body></html>
